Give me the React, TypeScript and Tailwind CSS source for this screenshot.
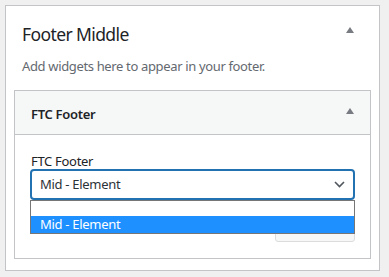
import React from "react";

function Up({ className = "" }: { className?: string }) {
  return (
    <svg width="8" height="6" viewBox="0 0 8 6" className={className}>
      <path d="M4 0 L8 6 L0 6 Z" fill="#787c82" />
    </svg>
  );
}

export default function App() {
  return (
    <div
      className="w-[389px] h-[277px] bg-[#f0f0f0] pt-[5px] pl-[5px]"
      style={{ fontFamily: '"Noto Sans", "Open Sans", sans-serif' }}
    >
      <div className="w-[375px] h-[266px] border border-[#c3c4c7] bg-white px-[8px]">
        <div className="flex justify-between items-start pt-[16px] pl-[8px] pr-[17px]">
          <div className="text-[17.5px] leading-[24px] tracking-[-0.6px] text-[#1d2327]">Footer Middle</div>
          <Up className="mt-[5px]" />
        </div>
        <div className="pl-[8px] mt-[10px] text-[13px] leading-[20px] tracking-[-0.35px] text-[#646970]">
          Add widgets here to appear in your footer.
        </div>
        <div className="mt-[14px] h-[169px] border border-[#c3c4c7]">
          <div className="h-[44px] bg-[#f6f7f7] border-b border-[#c3c4c7] flex justify-between items-start pl-[16px] pr-[16px] pt-[13px]">
            <div className="text-[13px] leading-[20px] font-semibold tracking-[-0.3px] text-[#1d2327]">FTC Footer</div>
            <Up className="mt-[4px]" />
          </div>
          <div className="px-[15px] pt-[18px]">
            <div className="text-[13px] leading-[16px] h-[16px] tracking-[-0.3px] text-[#1d2327] pl-[1px]">FTC Footer</div>
            <div className="relative">
              <div className="h-[31px] border-2 border-[#2271b1] rounded-[4px] flex items-center justify-between pl-[8px] pr-[8px] text-[13px] tracking-[-0.3px] text-[#2c3338]">
                <span>Mid - Element</span>
                <svg width="11" height="7" viewBox="0 0 11 7">
                  <path d="M1 1 L5.5 5.5 L10 1" stroke="#50575e" strokeWidth="1.6" fill="none" />
                </svg>
              </div>
              <div className="flex justify-end mt-[12px]">
                <div className="w-[80px] h-[30px] bg-[#f6f7f7] border border-[#dcdcde] rounded-[3px]" />
              </div>
              <div className="absolute left-0 right-0 top-[31px] bg-white border border-[#767676] text-[13px] tracking-[-0.3px]">
                <div className="h-[15px]" />
                <div className="h-[17px] leading-[17px] bg-[#1e90ff] text-white pl-[9px]">Mid - Element</div>
              </div>
            </div>
          </div>
        </div>
      </div>
    </div>
  );
}
